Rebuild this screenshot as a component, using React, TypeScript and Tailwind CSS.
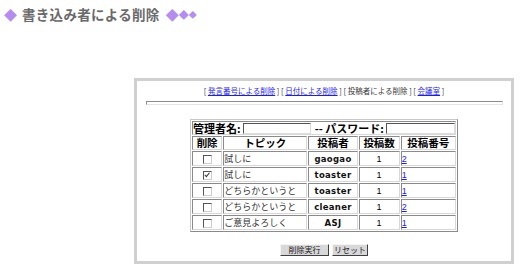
import React from "react"

const jp = { fontFamily: '"Noto Sans CJK JP", "Liberation Sans", sans-serif' }

interface Post {
    checked: boolean,
    topic: string,
    author: string,
    count: string,
    no: string
}

const posts: Post[] = [
    { checked: false, topic: '試しに', author: 'gaogao', count: '1', no: '2' },
    { checked: true, topic: '試しに', author: 'toaster', count: '1', no: '1' },
    { checked: false, topic: 'どちらかというと', author: 'toaster', count: '1', no: '1' },
    { checked: false, topic: 'どちらかというと', author: 'cleaner', count: '1', no: '2' },
    { checked: false, topic: 'ご意見よろしく', author: 'ASJ', count: '1', no: '1' },
]

const cell = "border border-t-[#8a8a8a] border-l-[#8a8a8a] border-b-[#d8d8d8] border-r-[#d8d8d8] p-0 h-[14px] leading-[12px]"

function Check({ on }: { on: boolean }) {
    return (
        <span className="inline-block w-[9px] h-[9px] border border-t-[#555] border-l-[#555] border-b-[#ccc] border-r-[#ccc] bg-white align-middle relative">
            {on && (
                <svg viewBox="0 0 9 9" className="absolute left-0 top-0 w-[7px] h-[7px]">
                    <path d="M1 3.5 L3 6 L7 1" stroke="#333" strokeWidth="1.3" fill="none" />
                </svg>
            )}
        </span>
    )
}

export default function App() {
    return (
        <div className="w-[523px] h-[273px] bg-white relative overflow-hidden" style={jp}>
            {/* title */}
            <div className="flex items-center h-[28px] pl-[4px] pt-[1px]">
                <span className="text-[#b48cf2] text-[13px] leading-none">◆</span>
                <h1 className="ml-[5px] text-[13.5px] font-bold text-[#6a6a6a] leading-none tracking-[0.3px]">書き込み者による削除</h1>
                <span className="ml-[6px] text-[#b48cf2] leading-none flex items-center">
                    <span className="text-[13px]">◆</span>
                    <span className="text-[10px]">◆</span>
                    <span className="text-[8px]">◆</span>
                </span>
            </div>

            {/* box */}
            <div className="ml-[134px] mt-[50px] w-[380px] h-[186px] border-[3px] border-[#d0d0d0] flex flex-col items-center">
                <p className="mt-[5px] text-[7.5px] leading-[10px] text-[#333] whitespace-nowrap">
                    [ <a className="text-[#1a1aff] underline">発言番号による削除</a> ] [ <a className="text-[#1a1aff] underline">日付による削除</a> ] [ 投稿者による削除 ] [ <a className="text-[#1a1aff] underline">会議室</a> ]
                </p>
                <div className="mt-[5px] w-[357px] h-[4px] border border-t-[#8c8c8c] border-l-[#8c8c8c] border-b-[#e4e4e4] border-r-[#e4e4e4] self-start ml-[9px]" />

                <table className="mt-[14px] border-separate border-spacing-[1px] border border-t-[#c8c8c8] border-l-[#c8c8c8] border-b-[#8a8a8a] border-r-[#8a8a8a] text-black">
                    <tbody>
                        <tr>
                            <td colSpan={5} className={cell + " h-[14px] text-[11px] font-bold whitespace-nowrap"}>
                                <div className="flex items-center">
                                    <span>管理者名:</span>
                                    <span className="ml-[2px] w-[68px] h-[11px] border border-t-[#555] border-l-[#555] border-b-[#ddd] border-r-[#ddd] bg-white inline-block" />
                                    <span className="ml-[4px]">-- パスワード:</span>
                                    <span className="ml-[2px] w-[69px] h-[11px] border border-t-[#555] border-l-[#555] border-b-[#ddd] border-r-[#ddd] bg-white inline-block" />
                                </div>
                            </td>
                        </tr>
                        <tr className="text-[10.5px] font-bold text-center">
                            <td className={cell + " w-[30px]"}>削除</td>
                            <td className={cell + " w-[84px]"}>トピック</td>
                            <td className={cell + " w-[49px]"}>投稿者</td>
                            <td className={cell + " w-[41px]"}>投稿数</td>
                            <td className={cell + " w-[55px]"}>投稿番号</td>
                        </tr>
                        {posts.map((p, idx) => {
                            return (
                                <tr key={idx} className="text-[9px]">
                                    <td className={cell + " h-[15px] text-center"}><Check on={p.checked} /></td>
                                    <td className={cell + " text-left text-[#333]"}>{p.topic}</td>
                                    <td className={cell + " text-center font-bold text-[8.5px] text-[#111]"} style={{ fontFamily: '"DejaVu Sans", sans-serif', letterSpacing: '0.3px' }}>{p.author}</td>
                                    <td className={cell + " text-center"} style={{ fontFamily: '"Liberation Sans", sans-serif' }}>{p.count}</td>
                                    <td className={cell + " text-left"} style={{ fontFamily: '"Liberation Sans", sans-serif' }}>
                                        <a className="text-[#1a1aff] underline">{p.no}</a>
                                    </td>
                                </tr>
                            )
                        })}
                    </tbody>
                </table>

                <div className="mt-[12px] flex gap-[3px] text-[8px]">
                    <button className="h-[12px] w-[49px] leading-[10px] bg-[#d8d8d8] border border-t-[#f4f4f4] border-l-[#f4f4f4] border-b-[#404040] border-r-[#404040] text-[#222]">削除実行</button>
                    <button className="h-[12px] w-[36px] leading-[10px] bg-[#d8d8d8] border border-t-[#f4f4f4] border-l-[#f4f4f4] border-b-[#404040] border-r-[#404040] text-[#222]">リセット</button>
                </div>
            </div>
        </div>
    )
}
